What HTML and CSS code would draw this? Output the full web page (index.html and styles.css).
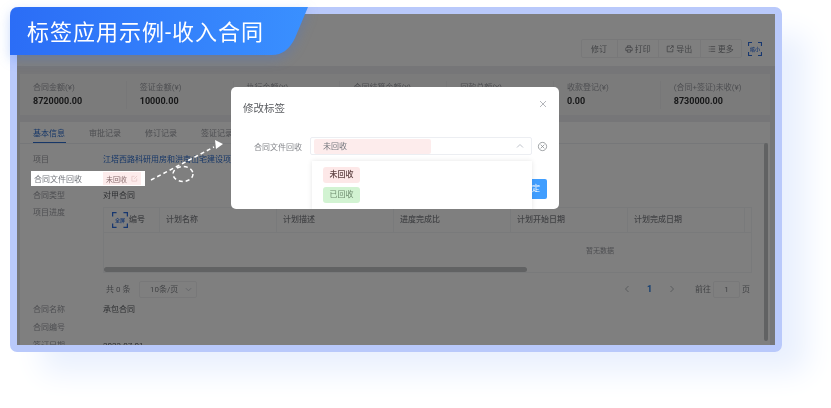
FILE: index.html
```html
<!DOCTYPE html>
<html lang="zh-CN">

<head>
    <meta charset="UTF-8">
    <title>标签应用示例-收入合同</title>
    <link rel="stylesheet" href="styles.css">
</head>

<body>
    <div class="stage">
        <div class="frame">
            <div class="screen">
                <div class="toolbar">
                    <div class="btn-group">
                        <span class="tool-btn tool-first">修订</span>
                        <span class="tool-btn">
                            <svg class="tool-icon" viewBox="0 0 10 10"><path d="M3 3V1h4v2M1 7V4a1 1 0 0 1 1-1h6a1 1 0 0 1 1 1v3H7.500M2.500 7H1M3 6h4v3H3z"/></svg>打印
                        </span>
                        <span class="tool-btn">
                            <svg class="tool-icon" viewBox="0 0 10 10"><path d="M5 1.500H1.500v7h7V5M6 1h3v3M9 1 5 5"/></svg>导出
                        </span>
                        <span class="tool-btn">
                            <svg class="tool-icon" viewBox="0 0 10 10"><path d="M1 2h1M3 2h6M1 5h1M3 5h6M1 8h1M3 8h6"/></svg>更多
                        </span>
                    </div>
                    <div class="corner-btn">
                        <svg viewBox="0 0 14 14"><path d="M.5 4V.5H4M10 .5h3.500V4M13.500 10v3.500H10M4 13.500H.5V10"/></svg>
                        <span class="corner-text">缩小</span>
                    </div>
                </div>

                <div class="stats">
                    <div class="stat"><p class="stat-label">合同金额(¥)</p><p class="stat-value">8720000.00</p></div>
                    <div class="stat"><p class="stat-label">签证金额(¥)</p><p class="stat-value">10000.00</p></div>
                    <div class="stat"><p class="stat-label">执行金额(¥)</p></div>
                    <div class="stat"><p class="stat-label">合同结算金额(¥)</p></div>
                    <div class="stat"><p class="stat-label">回款总额(¥)</p></div>
                    <div class="stat"><p class="stat-label">收款登记(¥)</p><p class="stat-value">0.00</p></div>
                    <div class="stat"><p class="stat-label">(合同+签证)未收(¥)</p><p class="stat-value">8730000.00</p></div>
                </div>

                <div class="main">
                    <div class="tabs">
                        <span class="tab tab-active">基本信息</span>
                        <span class="tab">审批记录</span>
                        <span class="tab">修订记录</span>
                        <span class="tab">签证记录</span>
                    </div>

                    <div class="row row-tall"><span class="row-label">项目</span><span class="project-link">江塔西路科研用房和洪南山宅建设项目</span></div>
                    <div class="row row-tall"></div>
                    <div class="row"><span class="row-label">合同类型</span><span>对甲合同</span></div>
                    <div class="row row-progress">
                        <span class="row-label">项目进度</span>
                        <div class="progress">
                            <div class="table">
                                <div class="table-head">
                                    <div class="cell cell-num">
                                        <div class="corner-btn corner-small">
                                            <svg viewBox="0 0 14 14"><path d="M.5 4V.5H4M10 .5h3.500V4M13.500 10v3.500H10M4 13.500H.5V10"/></svg>
                                            <span class="corner-text">全屏</span>
                                        </div>
                                        编号
                                    </div>
                                    <div class="cell">计划名称</div>
                                    <div class="cell">计划描述</div>
                                    <div class="cell">进度完成比</div>
                                    <div class="cell">计划开始日期</div>
                                    <div class="cell">计划完成日期</div>
                                    <div class="cell">计划</div>
                                </div>
                                <div class="table-empty">暂无数据</div>
                                <div class="table-scroll"><div class="table-thumb"></div></div>
                            </div>
                            <div class="pager">
                                <span class="pager-total">共 0 条</span>
                                <span class="pager-size">10条/页<svg class="chevron" viewBox="0 0 8 8"><path d="M1 2.500 4 5.500l3-3"/></svg></span>
                                <span class="pager-right">
                                    <svg class="pager-arrow" viewBox="0 0 8 8"><path d="M5.500 1 2.500 4l3 3"/></svg>
                                    <b class="pager-current">1</b>
                                    <svg class="pager-arrow" viewBox="0 0 8 8"><path d="M2.500 1l3 3-3 3"/></svg>
                                    <span class="pager-goto">前往</span>
                                    <span class="pager-input">1</span>
                                    <span>页</span>
                                </span>
                            </div>
                        </div>
                    </div>
                    <div class="row row-tall"><span class="row-label">合同名称</span><span>承包合同</span></div>
                    <div class="row row-tall"><span class="row-label">合同编号</span></div>
                    <div class="row row-tall"><span class="row-label">签订日期</span><span>2023-07-01</span></div>
                </div>

                <div class="page-scroll"></div>
                <div class="overlay"></div>
            </div>
        </div>

        <div class="banner-wrap">
            <div class="banner">标签应用示例-收入合同</div>
        </div>

        <div class="modal">
            <div class="modal-head">
                <span>修改标签</span>
                <svg class="modal-close" viewBox="0 0 8 8"><path d="M1 1l6 6M7 1 1 7"/></svg>
            </div>
            <div class="modal-field">
                <span class="modal-label">合同文件回收</span>
                <div class="select">
                    <span class="select-tag">未回收</span>
                    <svg class="select-chevron" viewBox="0 0 8 8"><path d="M1 5.500 4 2.500l3 3"/></svg>
                </div>
                <svg class="clear-icon" viewBox="0 0 12 12"><circle cx="6" cy="6" r="4.500"/><path d="M4 4l4 4M8 4 4 8"/></svg>
            </div>
            <span class="modal-ok">定</span>
            <div class="dropdown">
                <span class="option option-red">未回收</span>
                <span class="option option-green">已回收</span>
            </div>
        </div>

        <div class="callout">
            <span class="callout-label">合同文件回收</span>
            <span class="callout-tag">未回收
                <svg class="callout-edit" viewBox="0 0 8 8"><path d="M4 1.500H1v5.500h5.500V4M3.500 4.500 7 1"/></svg>
            </span>
        </div>

        <svg class="pointer" viewBox="0 0 831 408">
            <path class="pointer-line" d="M151 180 214 147"/>
            <path class="pointer-head" d="M215 140 223 144 216 149z"/>
            <ellipse class="pointer-line" cx="183" cy="174" rx="10" ry="7.500"/>
        </svg>
    </div>
</body>

</html>
```

FILE: styles.css
```css
* {
    box-sizing: border-box;
}

body {
    margin: 0;
    background: white;
    font-family: Roboto, "Noto Sans CJK SC", sans-serif;
    font-size: 8px;
    color: #303133;
    overflow: hidden;
}

p {
    margin: 0;
}

svg {
    fill: none;
    stroke: currentColor;
}

/* the reference is an upscaled capture, so everything is a little soft */
.stage {
    position: relative;
    width: 831px;
    height: 408px;
    padding: 7px 0 0 10px;
    overflow: hidden;
    filter: blur(0.35px);
}

.frame {
    width: 772px;
    height: 345px;
    border: 7px solid #b9c9fb;
    border-radius: 7px;
    box-shadow: 28px 24px 30px -4px #e9f0fe;
}

.screen {
    position: relative;
    height: 100%;
    background: #ecedf0;
    overflow: hidden;
}

.toolbar {
    display: flex;
    justify-content: flex-end;
    align-items: center;
    height: 52px;
    padding: 17px 13px 0 0;
    background: white;
    gap: 6px;
}

.btn-group {
    display: flex;
    height: 19px;
    border: 1px solid #f0f1f3;
    border-radius: 2px;
    color: #85878c;
}

.tool-btn {
    display: flex;
    align-items: center;
    justify-content: center;
    gap: 2px;
    width: 41.500px;
    border-left: 1px solid #f0f1f3;
}

.tool-first {
    width: 35px;
    border-left: none;
}

.tool-icon {
    width: 8px;
    height: 8px;
    stroke-width: 1;
}

.corner-btn {
    position: relative;
    display: flex;
    align-items: center;
    justify-content: center;
    width: 14px;
    height: 14px;
    color: #2f6fe0;
}

.corner-btn svg {
    position: absolute;
    inset: 0;
    stroke-width: 1.200;
}

.corner-text {
    font-size: 5px;
    font-weight: 500;
    white-space: nowrap;
}

.corner-small {
    width: 16px;
    height: 15px;
    flex-shrink: 0;
}

.stats {
    display: flex;
    height: 41px;
    margin: 8px 5px 7px 3px;
    padding-top: 7px;
    background: #f7f7f7;
}

.stat {
    width: 106.800px;
    height: 28px;
    padding-left: 13px;
    border-right: 1px solid #efeff0;
}

.stat:last-child {
    border-right: none;
}

.stat-label {
    color: #9a9ca2;
    line-height: 13px;
}

.stat-value {
    font-size: 9px;
    font-weight: 700;
    line-height: 15px;
}

.main {
    height: 240px;
    margin: 0 5px 0 3px;
    padding: 0 2px 0 0;
    background: white;
}

.tabs {
    display: flex;
    height: 21.500px;
    margin-bottom: 7px;
    padding: 5px 0 0 13px;
    border-bottom: 1px solid #eceef2;
    gap: 23px;
    color: #9a9ca2;
}

.tab {
    width: 33px;
    height: 16px;
    white-space: nowrap;
    line-height: 13px;
}

.tab-active {
    color: #2f6fd0;
    border-bottom: 1px solid #2f6fd0;
}

.row {
    display: flex;
    height: 17px;
    padding-left: 13px;
    line-height: 17px;
    color: #5c5f64;
}

.row-tall {
    height: 18px;
    line-height: 18px;
}

.row-progress {
    height: 97px;
}

.row-label {
    flex-shrink: 0;
    width: 70px;
    color: #9a9ca2;
}

.project-link {
    color: #2f6fd0;
    white-space: nowrap;
}

.progress {
    width: 649px;
    padding-top: 3px;
}

.table {
    position: relative;
    height: 66px;
    border: 1px solid #f3f4f6;
    overflow: hidden;
}

.table-head {
    display: flex;
    height: 25px;
    border-bottom: 1px solid #f3f4f6;
    font-weight: 500;
    color: #85878c;
    font-size: 8px;
}

.cell {
    flex-shrink: 0;
    width: 117px;
    padding-left: 6px;
    border-right: 1px solid #f3f4f6;
    line-height: 24px;
    white-space: nowrap;
}

.cell-num {
    display: flex;
    align-items: center;
    width: 56px;
    padding-left: 8px;
    gap: 1px;
}

.table-empty {
    padding-left: 482px;
    color: #9a9ca2;
    font-size: 7px;
    line-height: 36px;
}

.table-scroll {
    position: absolute;
    left: 0;
    right: 0;
    bottom: 0;
    height: 5px;
}

.table-thumb {
    width: 423px;
    height: 100%;
    border-radius: 3px;
    background: #c2c4c6;
}

.pager {
    display: flex;
    align-items: center;
    height: 27px;
    padding: 6px 2px 0 3px;
    color: #85878c;
}

.pager-total {
    width: 33px;
}

.pager-size {
    display: flex;
    align-items: center;
    justify-content: space-between;
    width: 58px;
    height: 17px;
    padding: 0 4px 0 10px;
    border: 1px solid #f0f1f3;
    border-radius: 2px;
}

.chevron {
    width: 7px;
    height: 7px;
    color: #c0c4cc;
}

.pager-right {
    display: flex;
    align-items: center;
    margin-left: auto;
}

.pager-arrow {
    width: 8px;
    height: 8px;
    color: #b4b6bb;
}

.pager-current {
    width: 37px;
    text-align: center;
    color: #2a7de1;
    font-size: 9px;
}

.pager-goto {
    margin-left: 19px;
}

.pager-input {
    width: 27px;
    height: 17px;
    margin: 0 2px;
    border: 1px solid #f0f1f3;
    border-radius: 2px;
    line-height: 15px;
    text-align: center;
}

.page-scroll {
    position: absolute;
    top: 129px;
    right: 7px;
    width: 4px;
    height: 198px;
    border-radius: 2px;
    background: #c2c4c6;
}

.overlay {
    position: absolute;
    inset: 0;
    background: rgba(0, 0, 0, 0.5);
}

.banner-wrap {
    position: absolute;
    top: 7px;
    left: 10px;
    filter: drop-shadow(0 4px 6px rgba(43, 111, 245, 0.25));
}

.banner {
    width: 298px;
    height: 48px;
    padding-left: 17px;
    background: linear-gradient(90deg, #2b6df6, #3a90ff);
    clip-path: path("M0 48V9Q0 0 9 0H298L285 31Q277 48 262 48Z");
    color: white;
    font-size: 22px;
    letter-spacing: 1px;
    line-height: 51px;
    white-space: nowrap;
}

.modal {
    position: absolute;
    top: 87px;
    left: 231px;
    width: 328px;
    height: 122px;
    border-radius: 5px;
    background: white;
    overflow: hidden;
}

.modal-head {
    display: flex;
    justify-content: space-between;
    align-items: center;
    height: 40px;
    padding: 0 12px;
    color: #5a5c60;
    font-size: 10.500px;
}

.modal-close {
    width: 8px;
    height: 8px;
    margin-top: -6px;
    color: #b4b6bb;
}

.modal-field {
    display: flex;
    align-items: center;
    height: 18px;
    margin-top: 10px;
    padding-left: 23px;
}

.modal-label {
    width: 56px;
    color: #85878c;
}

.select {
    display: flex;
    align-items: center;
    justify-content: space-between;
    width: 222px;
    height: 18px;
    padding: 0 7px 0 3px;
    border: 1px solid #eceef2;
    border-radius: 2px;
}

.select-tag {
    width: 117px;
    height: 15px;
    padding-left: 9px;
    border-radius: 2px;
    background: #fdecec;
    color: #74777d;
    line-height: 15px;
}

.select-chevron {
    width: 8px;
    height: 8px;
    color: #c0c4cc;
}

.clear-icon {
    width: 11px;
    height: 11px;
    margin-left: 5px;
    color: #808388;
    stroke-width: 0.800;
}

.modal-ok {
    position: absolute;
    top: 92px;
    right: 12px;
    width: 36px;
    height: 20px;
    padding-right: 7px;
    border-radius: 2px;
    background: #409eff;
    color: white;
    line-height: 20px;
    text-align: right;
}

.dropdown {
    position: absolute;
    top: 74px;
    left: 81px;
    display: flex;
    flex-direction: column;
    align-items: flex-start;
    width: 220px;
    height: 50px;
    padding: 6px 0 0 11px;
    background: white;
    box-shadow: 0 0 5px rgba(0, 0, 0, 0.1);
    gap: 4px;
}

.option {
    width: 37px;
    height: 16px;
    border-radius: 3px;
    line-height: 16px;
    text-align: center;
}

.option-red {
    background: #fde8e8;
    color: #5c3f3f;
    font-weight: 500;
}

.option-green {
    background: #d2f3d2;
    color: #6e8c6e;
}

.callout {
    position: absolute;
    top: 171px;
    left: 31px;
    display: flex;
    align-items: center;
    width: 114px;
    height: 15px;
    padding-left: 3px;
    background: white;
}

.callout-label {
    width: 69px;
    color: #74777d;
}

.callout-tag {
    display: flex;
    align-items: center;
    justify-content: space-between;
    width: 38px;
    height: 13px;
    padding: 0 3px 0 3px;
    background: #fdecec;
    color: #8a6e6f;
    font-size: 7px;
}

.callout-edit {
    width: 7px;
    height: 7px;
    color: #e8c9c9;
}

.pointer {
    position: absolute;
    top: 0;
    left: 0;
    width: 831px;
    height: 408px;
}

.pointer-line {
    stroke: white;
    stroke-width: 1.500;
    stroke-dasharray: 4 3;
}

.pointer-head {
    fill: white;
    stroke: none;
}
```
